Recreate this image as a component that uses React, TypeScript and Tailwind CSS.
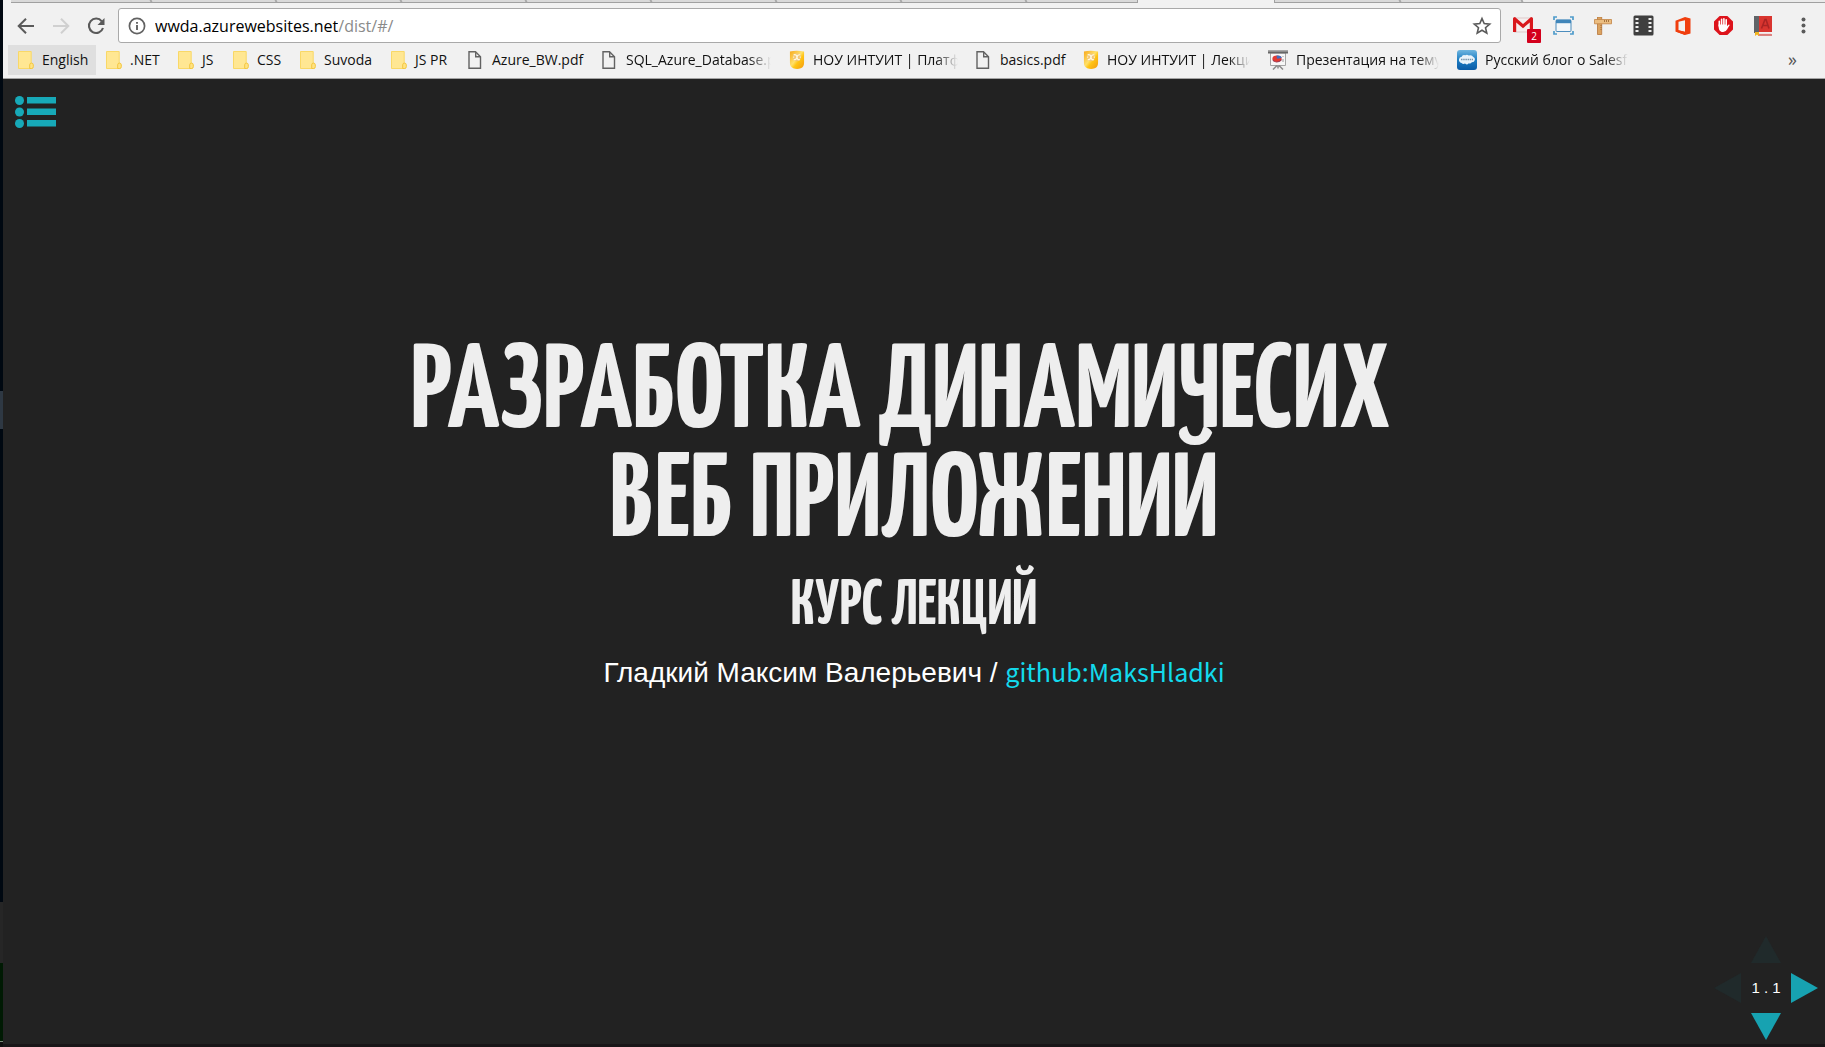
import type { ReactNode } from 'react';

function FolderIcon() {
  return (
    <svg width="16" height="20" viewBox="0 0 16 20" aria-hidden="true">
      <path d="M.5 1.500h12.700v11.500l1 1v4.500H.5z" fill="#ffe793" stroke="#f9d867" />
      <path d="M11.700 18.500v-3.600a1.800 1.800 0 0 1 3.600 0v1.900q0 1.700-1.700 1.700z" fill="#ffe383" stroke="#f3c63f" />
    </svg>
  );
}

function FileIcon() {
  return (
    <svg width="16" height="20" viewBox="0 0 16 20" fill="none" stroke="#626262" strokeWidth="1.4" aria-hidden="true">
      <path d="M1 1.700h6.500l5 5v11.600H1z" />
      <path d="M7.700 2v4.700h4.600" />
    </svg>
  );
}

function ShieldIcon() {
  return (
    <svg width="16" height="20" viewBox="0 0 17 20" aria-hidden="true">
      <defs>
        <linearGradient id="gold" x1="0" y1="0" x2="1" y2="1">
          <stop offset="0" stopColor="#f7a81c" />
          <stop offset=".45" stopColor="#ffe06a" />
          <stop offset=".6" stopColor="#ffc414" />
          <stop offset="1" stopColor="#f39a0e" />
        </linearGradient>
      </defs>
      <path d="M1 1q7-1.500 15 0v12q0 4.500-3.500 5.800-4 1.500-8-.1Q1 17.400 1 13z" fill="url(#gold)" />
      <circle cx="8.300" cy="7" r="4.300" fill="#f2c675" />
      <path d="M5 4.500q3-1 3.500 2.500t3 2.500M12 4.500Q9 4 8.500 7T5 9.500M4.500 7h1M11.500 7h1" fill="none" stroke="#fff8e0" strokeWidth="1.300" />
    </svg>
  );
}

function PresentationIcon() {
  return (
    <svg width="20" height="20" viewBox="0 0 20 20" aria-hidden="true">
      <path d="M2.500 3h15v12.500h-15z" fill="#f7f7f7" stroke="#a5a5a5" />
      <path d="M0 .5h20v3H0z" fill="#666" />
      <path d="M0 1.300h20" stroke="#999" />
      <ellipse cx="9" cy="8.800" rx="4.600" ry="3.300" fill="#e23a32" />
      <path d="M9 8.800 8.500 5.500q5-.5 5.200 2.600z" fill="#3f6fc0" />
      <path d="M4.600 9.500q4 4.500 9-.2v1q-4.500 4-8.600.8z" fill="#8c3a58" />
      <path d="M15 6v1M15 9v3" stroke="#9a9a9a" />
      <path d="M10 15.500v3M9 15.500l-4 4M11 15.500l4 4" stroke="#8a8a8a" strokeWidth="1.500" />
    </svg>
  );
}

function CloudIcon() {
  return (
    <svg width="20" height="20" viewBox="0 0 20 20" aria-hidden="true">
      <defs>
        <linearGradient id="sky" x1="0" y1="0" x2="0" y2="1">
          <stop offset="0" stopColor="#6fb6e0" />
          <stop offset=".5" stopColor="#1c7dc2" />
          <stop offset="1" stopColor="#0a5ba6" />
        </linearGradient>
      </defs>
      <rect width="20" height="20" rx="3" fill="url(#sky)" />
      <path d="M4.500 13Q1.500 12 2 9.200 2.500 6.800 4.500 7 5.500 4.300 8.300 5.300 10 4 11.700 5.500q3.300-1 4.300 1.200 2.300.8 1.900 3-.5 2.600-3.100 2.500-1.300 1.800-3 1-2 2.200-3.800.4-2 .9-3.500-.6z" fill="#e9f3fa" />
      <path d="M4 9.500h12" stroke="#7796ad" strokeWidth="1.500" strokeDasharray="1.500 .7" />
    </svg>
  );
}

type Bookmark = { label: string; icon: ReactNode; width: string; active?: boolean; fade?: boolean };

const bookmarks: Bookmark[] = [
  { label: 'English', icon: <FolderIcon />, width: 'w-[46px]', active: true },
  { label: '.NET', icon: <FolderIcon />, width: 'w-[30px]' },
  { label: 'JS', icon: <FolderIcon />, width: 'w-[13px]' },
  { label: 'CSS', icon: <FolderIcon />, width: 'w-[25px]' },
  { label: 'Suvoda', icon: <FolderIcon />, width: 'w-[49px]' },
  { label: 'JS PR', icon: <FolderIcon />, width: 'w-[35px]' },
  { label: 'Azure_BW.pdf', icon: <FileIcon />, width: 'w-[92px]' },
  { label: 'SQL_Azure_Database.pdf', icon: <FileIcon />, width: 'w-[145px]', fade: true },
  { label: 'НОУ ИНТУИТ | Платформа', icon: <ShieldIcon />, width: 'w-[145px]', fade: true },
  { label: 'basics.pdf', icon: <FileIcon />, width: 'w-[65px]' },
  { label: 'НОУ ИНТУИТ | Лекция', icon: <ShieldIcon />, width: 'w-[143px]', fade: true },
  { label: 'Презентация на тему:', icon: <PresentationIcon />, width: 'w-[143px]', fade: true },
  { label: 'Русский блог о Salesforce', icon: <CloudIcon />, width: 'w-[143px]', fade: true },
];

function TabEdges() {
  return (
    <div className="flex h-[3px] overflow-hidden bg-[#f1f1f1] pl-2" aria-hidden="true">
      <div className="flex w-[1126px] border-b border-[#a0a0a0] bg-[#d9d9d9]">
        <div className="w-[139px] shrink-0" />
        {[0, 1, 2, 3, 4, 5, 6, 7].map((n) => (
          <div key={n} className="w-[125px] shrink-0 skew-x-[25deg] border-l-2 border-[#a8a8a8]" />
        ))}
      </div>
      <div className="w-[138px] border-x border-[#a0a0a0] bg-[#f1f1f1]" />
      <div className="flex w-[248px] border-b border-[#a0a0a0] bg-[#d9d9d9]">
        <div className="w-[124px]" />
        <div className="w-[124px] skew-x-[25deg] border-x-2 border-[#a8a8a8]" />
      </div>
      <div className="flex-1 border-b border-[#a0a0a0] bg-[#ebebeb]" />
    </div>
  );
}

function ToolButton({ label, children }: { label: string; children: ReactNode }) {
  return (
    <button type="button" aria-label={label} className="relative flex h-8 w-10 items-center justify-center">
      {children}
    </button>
  );
}

function Toolbar() {
  return (
    <div className="flex h-[42px] items-center pr-0.5 pt-[3px]">
      <div className="flex w-[115px] shrink-0 items-center gap-[11px] pl-[11px]">
        <button type="button" aria-label="Back" className="flex w-6 justify-center">
          <svg width="18" height="18" viewBox="0 0 18 18" fill="none" stroke="#5a5a5a" strokeWidth="2">
            <path d="M17 9H2M9 1.700 1.700 9 9 16.300" />
          </svg>
        </button>
        <button type="button" aria-label="Forward" disabled className="flex w-6 justify-center">
          <svg width="18" height="18" viewBox="0 0 18 18" fill="none" stroke="#d0d0d0" strokeWidth="2">
            <path d="M1 9h15M9 1.700 16.300 9 9 16.300" />
          </svg>
        </button>
        <button type="button" aria-label="Reload" className="flex w-6 justify-center">
          <svg width="18" height="18" viewBox="0 0 18 18" fill="none" stroke="#5a5a5a" strokeWidth="2.100">
            <path d="M14.800 4.300A7.200 7.200 0 1 0 16 11" />
            <path d="M17.500 1v7h-7z" fill="#5a5a5a" stroke="none" />
          </svg>
        </button>
      </div>
      <div className="flex h-[35px] min-w-0 flex-1 items-center rounded-[3px] border border-[#a9a9a9] bg-white pl-[9px] pr-2">
        <svg width="18" height="18" viewBox="0 0 18 18" className="shrink-0" aria-hidden="true">
          <circle cx="9" cy="9" r="7.600" fill="none" stroke="#626262" strokeWidth="1.700" />
          <path d="M9 8v5M9 5v1.800" stroke="#626262" strokeWidth="1.900" />
        </svg>
        <input
          aria-label="Address"
          defaultValue="wwda.azurewebsites.net"
          className="ml-[9px] field-sizing-content text-base leading-5 text-black outline-none"
        />
        <span className="flex-1 text-base leading-5 text-[#8a8a8a]">/dist/#/</span>
        <button type="button" aria-label="Bookmark this page">
          <svg width="20" height="20" viewBox="0 0 20 20" fill="none" stroke="#5a5a5a" strokeWidth="1.600">
            <path d="m10 2.600 2.200 5 5.500.5-4.200 3.600 1.300 5.400L10 14.200l-4.800 2.900 1.300-5.400L2.300 8.100l5.500-.5z" />
          </svg>
        </button>
      </div>
      <div className="flex shrink-0 pl-0.5">
        <ToolButton label="Mail, 2 unread">
          <svg width="20" height="16" viewBox="0 0 20 16" className="-mt-0.5">
            <path d="M1 1h18v14H1z" fill="#f5eeee" stroke="#ddc9c9" />
            <path d="M0 1.500Q0 0 2 0l8 7 8-7q2 0 2 1.500V15h-3.200V5.500L10 11.200 3.200 5.500V15H0z" fill="#d9181c" />
          </svg>
          <span className="absolute left-[24px] top-[19px] flex h-[14px] w-[14px] items-center justify-center rounded-[1px] bg-[#d3001c] text-[10px] leading-3 text-white">
            2
          </span>
        </ToolButton>
        <ToolButton label="Window resizer">
          <svg width="21" height="19" viewBox="0 0 21 19" fill="none">
            <path d="M1 4V1h3M17 1h3v3M20 15v3h-3M4 18H1v-3" stroke="#4f9ccb" strokeWidth="1.700" />
            <rect x="3" y="4" width="15" height="11.500" rx="1" fill="#f3f7fa" stroke="#4c8dbd" />
            <path d="M3 3.700h15v3.500H3z" fill="#3f86bb" />
          </svg>
        </ToolButton>
        <ToolButton label="Page ruler">
          <svg width="18" height="18" viewBox="0 0 18 18">
            <path d="M3.500 0h4.200v17.500H3.500z" fill="#dba360" stroke="#b8763a" strokeWidth=".8" />
            <path d="M.5 2.500h17v4.300H.5z" fill="#ebbd80" stroke="#c28445" strokeWidth=".8" />
            <path d="M10.500 3v2M12.500 3v2M14.500 3v2M6.500 8.500h1M6.500 10.500h1M6.500 12.500h1" stroke="#96602d" strokeWidth=".8" />
          </svg>
        </ToolButton>
        <ToolButton label="Video downloader">
          <svg width="21" height="21" viewBox="0 0 21 21">
            <rect x=".5" y=".5" width="20" height="20" rx="1.500" fill="#3f3f3f" />
            <path d="M4 3v15M17 3v15" stroke="#eeeeee" strokeWidth="3" strokeDasharray="2 2" />
          </svg>
        </ToolButton>
        <ToolButton label="Office">
          <svg width="16" height="18" viewBox="0 0 16 18">
            <path d="M10 0 15.500 1.600v14.800L10 18 .5 14.500V3.800zm0 3.200L3.500 4.800v8.400L10 15z" fill="#f03e0e" fillRule="evenodd" />
            <path d="M.5 14.500 3.500 13.200 10 14.800V18z" fill="#f03e0e" />
          </svg>
        </ToolButton>
        <ToolButton label="Ad blocker">
          <svg width="19" height="19" viewBox="0 0 19 19">
            <path d="M5.600 0h7.800L19 5.600v7.800L13.400 19H5.600L0 13.400V5.600z" fill="#dd141c" />
            <path d="M5.300 10V5.200M7.600 9V3.300M9.900 9V2.700M12.200 9V3.700" stroke="#fff" strokeWidth="1.600" strokeLinecap="round" />
            <path d="M4.500 8.500H13v1.700l1.300-1.500q1-.7 1.400.3l-2.500 4.300q-1.300 2.700-4 2.700-3.300 0-4.200-2.800-.5-1.800-.5-4.700z" fill="#fff" />
          </svg>
        </ToolButton>
        <ToolButton label="Dictionary">
          <svg width="18" height="20" viewBox="0 0 18 20">
            <path d="M0 0h5v17H0z" fill="#606468" />
            <path d="M5 0h13v16H5z" fill="#d9352f" />
            <path d="M1 17h16v2H1z" fill="#f2dede" />
            <path d="M4 19h14" stroke="#cf3b36" strokeWidth="1.200" />
            <path d="m7.500 12.500 3.500-9h1l3 9M8.500 9.500h6" fill="none" stroke="#ab2424" strokeWidth="1.600" />
            <path d="M1 16h4v4l-2-1.500L1 20z" fill="#f3b51d" />
          </svg>
        </ToolButton>
        <ToolButton label="Menu">
          <svg width="5" height="17" viewBox="0 0 5 17" fill="#5a5a5a">
            <circle cx="2.500" cy="2.500" r="2" />
            <circle cx="2.500" cy="8.500" r="2" />
            <circle cx="2.500" cy="14.500" r="2" />
          </svg>
        </ToolButton>
      </div>
    </div>
  );
}

function BookmarksBar() {
  return (
    <nav aria-label="Bookmarks" className="flex h-[30px] items-center pl-[5px] text-sm text-[#111]">
      {bookmarks.map((b) => (
        <a
          key={b.label}
          href="#"
          className={`flex h-[30px] shrink-0 items-center gap-2 pl-2.5 pr-2 ${b.active ? 'bg-[#dfdfdf]' : ''}`}
        >
          {b.icon}
          <span
            className={`whitespace-nowrap ${b.width} ${
              b.fade ? 'overflow-hidden [mask-image:linear-gradient(to_right,black_85%,transparent)]' : ''
            }`}
          >
            {b.label}
          </span>
        </a>
      ))}
      <button type="button" aria-label="More bookmarks" className="ml-auto mr-[28px] pb-0.5 text-lg text-[#555]">
        »
      </button>
    </nav>
  );
}

function Controls() {
  return (
    <aside
      aria-label="Slide controls"
      className="absolute bottom-1 right-[7px] grid grid-cols-[27px_50px_27px] grid-rows-[27px_50px_27px] place-items-center"
    >
      <button type="button" aria-label="Up" disabled className="col-start-2">
        <svg width="30" height="27" fill="#202a2b"><path d="M15 0 30 27H0z" /></svg>
      </button>
      <button type="button" aria-label="Previous" disabled className="col-start-1 row-start-2">
        <svg width="27" height="30" fill="#202a2b"><path d="M0 15 27 0v30z" /></svg>
      </button>
      <span className="col-start-2 row-start-2 whitespace-pre font-['Liberation_Sans'] text-[15px] text-white">1 . 1</span>
      <button type="button" aria-label="Next" className="col-start-3 row-start-2">
        <svg width="27" height="30" fill="#17a2b1"><path d="M27 15 0 0v30z" /></svg>
      </button>
      <button type="button" aria-label="Down" className="col-start-2 row-start-3">
        <svg width="30" height="27" fill="#17a2b1"><path d="M15 27 0 0h30z" /></svg>
      </button>
    </aside>
  );
}

export default function App() {
  return (
    <div className="flex min-h-screen bg-[#222] font-['Open_Sans',sans-serif]">
      <div className="flex w-[3px] shrink-0 flex-col bg-[#000811]" aria-hidden="true">
        <div className="h-[391px]" />
        <div className="h-[38px] bg-[#2e3843]" />
        <div className="flex-1" />
        <div className="h-[61px] bg-[#262626]" />
        <div className="h-[78px] bg-[#001a03]" />
        <div className="h-px bg-[#7c8c7c]" />
        <div className="h-[5px] bg-[#101010]" />
      </div>
      <div className="flex min-w-0 flex-1 flex-col">
        <header className="border-b border-[#a3a3a3] bg-[#f1f1f1] pb-[3px]">
          <TabEdges />
          <Toolbar />
          <BookmarksBar />
        </header>
        <main className="relative flex flex-1 flex-col items-center border-b-[3px] border-[#191618] pt-[262px]">
          <button type="button" aria-label="Open menu" className="absolute left-3 top-[17px]">
            <svg width="41" height="32" viewBox="0 0 41 32" fill="#17a9b8">
              <circle cx="4.500" cy="4.500" r="4.500" />
              <circle cx="4.500" cy="16" r="4.500" />
              <circle cx="4.500" cy="27.500" r="4.500" />
              <path d="M12 1h29v6.500H12zM12 12.500h29V19H12zM12 24h29v6.500H12z" />
            </svg>
          </button>
          <h1 className="text-center font-['Yanone_Kaffeesatz','Open_Sans_Condensed',sans-serif] text-[119px] font-bold leading-[109px] text-[#eee]">
            <span className="block pr-7">РАЗРАБОТКА ДИНАМИЧЕСИХ</span>
            <span className="block">ВЕБ ПРИЛОЖЕНИЙ</span>
          </h1>
          <h2 className="mt-4 font-['Yanone_Kaffeesatz','Open_Sans_Condensed',sans-serif] text-[64px] font-bold leading-[64px] text-[#eee]">
            КУРС ЛЕКЦИЙ
          </h2>
          <p className="mt-4 font-['Liberation_Sans',sans-serif] text-[28px] leading-9 text-white">
            Гладкий Максим Валерьевич /{' '}
            <a href="#" className="font-['Source_Sans_3','Noto_Sans_CJK_SC',sans-serif] text-[#13daec]">
              github:MaksHladki
            </a>
          </p>
          <Controls />
        </main>
      </div>
    </div>
  );
}
